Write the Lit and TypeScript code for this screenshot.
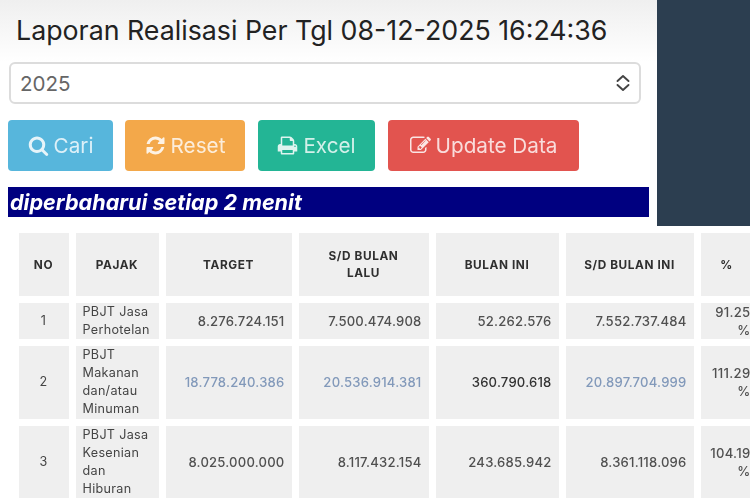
import { LitElement, html, css, svg } from "lit";
import { customElement } from "lit/decorators.js";

const ICONS = {
  search: "M1216 832q0-185-131.5-316.5t-316.5-131.5-316.5 131.5-131.5 316.5 131.5 316.5 316.5 131.5 316.5-131.5 131.5-316.5zm512 832q0 52-38 90t-90 38q-54 0-90-38l-343-342q-179 124-399 124-143 0-273.5-55.5t-225-150-150-225-55.5-273.5 55.5-273.5 150-225 225-150 273.5-55.5 273.5 55.5 225 150 150 225 55.5 273.5q0 220-124 399l343 343q37 37 37 90z",
  refresh: "M1639 1056q0 5-1 7-64 268-268 434.5t-478 166.5q-146 0-282.5-55t-243.5-157l-129 129q-19 19-45 19t-45-19-19-45v-448q0-26 19-45t45-19h448q26 0 45 19t19 45-19 45l-137 137q71 66 161 102t187 36q134 0 250-65t186-179q11-17 53-117 8-23 30-23h192q13 0 22.5 9.5t9.5 22.5zm25-800v448q0 26-19 45t-45 19h-448q-26 0-45-19t-19-45 19-45l138-138q-148-137-349-137-134 0-250 65t-186 179q-11 17-53 117-8 23-30 23h-199q-13 0-22.5-9.5t-9.5-22.5v-7q65-268 270-434.5t480-166.5q146 0 284 55.5t245 156.5l130-129q19-19 45-19t45 19 19 45z",
  print: "M448 1536h896v-256h-896v256zm0-640h896v-384h-160q-40 0-68-28t-28-68v-160h-640v640zm1152 64q0-26-19-45t-45-19-45 19-19 45 19 45 45 19 45-19 19-45zm128 0v416q0 13-9.5 22.5t-22.5 9.5h-224v160q0 40-28 68t-68 28h-960q-40 0-68-28t-28-68v-160h-224q-13 0-22.5-9.5t-9.5-22.5v-416q0-79 56.5-135.5t135.5-56.5h64v-544q0-40 28-68t68-28h672q40 0 88 20t76 48l152 152q28 28 48 76t20 88v256h64q79 0 135.5 56.5t56.5 135.5z",
  edit: "M888 1184l116-116-152-152-116 116v56h96v96h56zm440-720q-16-16-33 1l-350 350q-17 17-1 33t33-1l350-350q17-17 1-33zm80 594v190q0 119-84.5 203.5t-203.5 84.5h-832q-119 0-203.5-84.5t-84.5-203.5v-832q0-119 84.5-203.5t203.5-84.5h832q63 0 117 25 15 7 18 23 3 17-9 29l-49 49q-14 14-32 8-23-6-45-6h-832q-66 0-113 47t-47 113v832q0 66 47 113t113 47h832q66 0 113-47t47-113v-126q0-13 9-22l64-64q15-15 35-7t20 29zm-96-738l288 288-672 672h-288v-288zm444 132l-92 92-288-288 92-92q28-28 68-28t68 28l152 152q28 28 28 68t-28 68z",
};
const icon = (n: keyof typeof ICONS) =>
  html`<svg class="ic" viewBox="0 0 1792 1792" fill="currentColor">${svg`<path d=${ICONS[n]}></path>`}</svg>`;

const ROWS = [
  ["1", "PBJT Jasa Perhotelan", "8.276.724.151", "7.500.474.908", "52.262.576", "7.552.737.484", "91.25 %", ""],
  ["2", "PBJT Makanan dan/atau Minuman", "18.778.240.386", "20.536.914.381", "360.790.618", "20.897.704.999", "111.29 %", "hi"],
  ["3", "PBJT Jasa Kesenian dan Hiburan", "8.025.000.000", "8.117.432.154", "243.685.942", "8.361.118.096", "104.19 %", ""],
];

@customElement("app-root")
export class AppRoot extends LitElement {
  static styles = css`
    :host { display: block; width: 750px; height: 500px; overflow: hidden; background: #fff;
      font-family: Inter, "Liberation Sans", sans-serif; }
    .page { width: 750px; height: 500px; overflow: hidden; filter: blur(0.55px); }
    .top { display: flex; height: 226px; }
    .left { width: 657px; flex: none; box-sizing: border-box; padding: 0 8px;
      background: linear-gradient(#efefef 0, #fff 62px); }
    .side { flex: 1; background: #2c3e50; }
    h1 { margin: 0; padding: 14px 0 0 8px; height: 62px; box-sizing: border-box; font-size: 26.75px;
      line-height: 32px; font-weight: 400; color: #222; }
    .select { display: flex; align-items: center; justify-content: space-between; margin-left: 1px;
      width: 632px; height: 42px; box-sizing: border-box; padding: 0 8px 0 9px; background: #fff;
      border: 2px solid #dcdcdc; border-radius: 6px; font-size: 20.6px; color: #666; }
    .select svg { width: 16px; height: 18px; }
    .btns { display: flex; margin-top: 16px; height: 51px; }
    .btn { display: flex; align-items: center; justify-content: center; gap: 5px; height: 51px;
      box-sizing: border-box; border-radius: 4px; color: #fff; font-size: 20.7px; }
    .btn span { opacity: 0.8; }
    .ic { width: 21px; height: 21px; flex: none; opacity: 0.85; }
    .cari { width: 105px; background: #57b6dc; margin-right: 12px; }
    .reset { width: 120px; background: #f3a84a; margin-right: 13px; }
    .excel { width: 117px; background: #23b595; margin-right: 13px; }
    .update { width: 191px; background: #e2544f; }
    .banner { margin-top: 16px; width: 641px; height: 30px; box-sizing: border-box; padding-left: 2px;
      background: #000080; color: #fff; font-size: 21.6px; line-height: 30px; font-weight: 700; font-style: italic; }
    .wrap { padding: 0 0 0 11.5px; }
    table { border-collapse: separate; border-spacing: 7px; table-layout: fixed; width: 766px;
      font-size: 12.6px; color: #444; }
    th, td { background: #efefef; box-sizing: border-box; padding: 0 7px; }
    th { height: 63px; font-size: 11.8px; font-weight: 700; letter-spacing: 0.6px; color: #2f2f2f;
      text-align: center; line-height: 17px; padding: 1px 24px 0; }
    th.n, th.p, th.m { padding: 1px 4px 0; }
    th.pc { padding: 1px 22px 0 4px; }
    td { line-height: 18.1px; letter-spacing: 0.3px; height: 36px; }
    td.no { text-align: center; }
    td.txt { text-align: left; }
    td.num { text-align: right; font-size: 13.1px; letter-spacing: 0.2px; font-weight: 500; color: #505050; }
    td.num.hi { color: #8299ba; }
    td.num.strong { color: #333; font-weight: 500; }
    td.pct { font-size: 13.1px; padding: 0; font-weight: 500; color: #505050; }
    td.pct div { width: 50px; box-sizing: border-box; text-align: right; }
  `;

  render() {
    const cols = [50, 83, 126, 130, 123, 128, 70];
    return html`<div class="page">
      <div class="top">
        <div class="left">
          <h1>Laporan Realisasi Per Tgl 08-12-2025 16:24:36</h1>
          <div class="select"><span>2025</span>
            <svg viewBox="0 0 16 18" fill="none" stroke="#444" stroke-width="1.9" stroke-linecap="round" stroke-linejoin="round"><path d="M2.5 7l5.5-5 5.5 5M2.5 11l5.5 5 5.5-5"></path></svg>
          </div>
          <div class="btns">
            <div class="btn cari">${icon("search")}<span>Cari</span></div>
            <div class="btn reset">${icon("refresh")}<span>Reset</span></div>
            <div class="btn excel">${icon("print")}<span>Excel</span></div>
            <div class="btn update">${icon("edit")}<span>Update Data</span></div>
          </div>
          <div class="banner">diperbaharui setiap 2 menit</div>
        </div>
        <div class="side"></div>
      </div>
      <div class="wrap">
        <table>
          <colgroup>${cols.map((w) => html`<col style="width:${w}px" />`)}</colgroup>
          <thead><tr>
            <th class="n">NO</th><th class="p">PAJAK</th><th>TARGET</th><th>S/D BULAN LALU</th>
            <th class="m">BULAN INI</th><th class="m">S/D BULAN INI</th><th class="pc">%</th>
          </tr></thead>
          <tbody>
            ${ROWS.map((r) => html`<tr>
              <td class="no">${r[0]}</td>
              <td class="txt">${r[1]}</td>
              <td class="num ${r[7]}">${r[2]}</td>
              <td class="num ${r[7]}">${r[3]}</td>
              <td class="num ${r[7] ? "strong" : ""}">${r[4]}</td>
              <td class="num ${r[7]}">${r[5]}</td>
              <td class="pct"><div>${r[6]}</div></td>
            </tr>`)}
          </tbody>
        </table>
      </div>
    </div>`;
  }
}
